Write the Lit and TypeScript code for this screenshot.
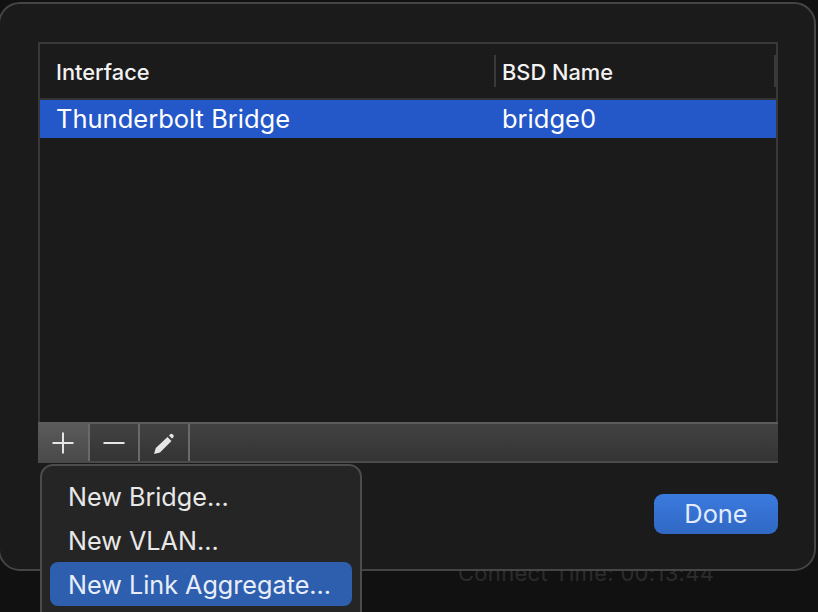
import { LitElement, html, css } from "lit";
import { customElement } from "lit/decorators.js";

@customElement("app-root")
export class AppRoot extends LitElement {
  static styles = css`
    :host {
      display: block;
      width: 818px;
      height: 612px;
      position: relative;
      overflow: hidden;
      background: #111111;
      font-family: Inter, "Liberation Sans", sans-serif;
      color: #f0f0f0;
    }

    .behind {
      height: 612px;
      box-sizing: border-box;
      padding: 560px 0 0 458px;
      font-size: 22px;
      line-height: 26px;
      letter-spacing: 0.3px;
      color: #2c2c2c;
    }

    .sheet {
      position: absolute;
      left: -2px;
      top: 2px;
      width: 818px;
      height: 569px;
      box-sizing: border-box;
      background: #1b1b1b;
      border: 2px solid #454545;
      border-radius: 22px;
      padding: 38px 36px 0 38px;
    }

    .table {
      width: 740px;
      height: 421px;
      box-sizing: border-box;
      border: 2px solid #383838;
      border-bottom: none;
      display: flex;
      flex-direction: column;
    }

    .head {
      height: 54px;
      flex: none;
      display: flex;
      align-items: center;
      border-bottom: 2px solid #333333;
      box-sizing: content-box;
    }

    .col-a {
      width: 454px;
      padding-left: 16px;
      box-sizing: border-box;
      flex: none;
    }

    .col-b {
      flex: 1;
      padding-left: 6px;
      height: 32px;
      display: flex;
      align-items: center;
      border-left: 2px solid #3a3a3a;
      border-right: 2px solid #3a3a3a;
    }

    .head span {
      display: block;
      font-size: 21.8px;
      font-weight: 500;
      color: #f2f2f2;
      padding-top: 1px;
    }

    .row {
      height: 38px;
      box-sizing: border-box;
      padding-bottom: 2px;
      flex: none;
      display: flex;
      align-items: center;
      background: #2457c8;
      color: #ffffff;
      font-size: 25.5px;
    }

    .row .col-a {
      padding-left: 16px;
      width: 462px;
    }

    .row .bsd {
      flex: 1;
    }

    .body {
      flex: 1;
    }

    .toolbar {
      height: 41px;
      flex: none;
      margin: 0 -2px;
      box-sizing: border-box;
      display: flex;
      background: linear-gradient(#424242, #343434);
      border-top: 2px solid #5c5c5c;
      border-bottom: 2px solid #4a4a4a;
    }

    .tool {
      width: 48px;
      flex: none;
      display: flex;
      align-items: center;
      justify-content: center;
      border-right: 2px solid #6a6a6a;
    }

    .tool.on {
      width: 50px;
      background: linear-gradient(#5a5a5a, #4a4a4a);
    }

    .tool svg {
      width: 24px;
      height: 24px;
      display: block;
    }

    .footer {
      display: flex;
      justify-content: flex-end;
      padding: 31px 0 0;
    }

    .done {
      width: 124px;
      height: 40px;
      box-sizing: border-box;
      padding-bottom: 2px;
      display: flex;
      align-items: center;
      justify-content: center;
      border-radius: 9px;
      background: linear-gradient(#3b7ade, #3068c4);
      color: #e3ecfb;
      font-size: 25.4px;
    }

    .menu {
      position: absolute;
      left: 40px;
      top: 464px;
      width: 322px;
      height: 160px;
      box-sizing: border-box;
      background: #252525;
      border: 2px solid #4c4c4c;
      border-radius: 13px;
      padding: 8px;
    }

    .item {
      height: 44px;
      box-sizing: border-box;
      padding: 2px 0 0 18px;
      display: flex;
      align-items: center;
      border-radius: 8px;
      font-size: 25.2px;
      color: #e8e8e8;
    }

    .item.active {
      background: #2e5fae;
      color: #e8eef9;
    }
  `;

  render() {
    return html`
      <div class="behind">Connect Time: 00:13:44</div>
      <div class="sheet">
        <div class="table">
          <div class="head">
            <div class="col-a"><span>Interface</span></div>
            <div class="col-b"><span>BSD Name</span></div>
          </div>
          <div class="row">
            <div class="col-a">Thunderbolt Bridge</div>
            <div class="bsd">bridge0</div>
          </div>
          <div class="body"></div>
          <div class="toolbar">
            <div class="tool on">
              <svg viewBox="0 0 24 24"><path d="M12 1.500v21M1.500 12h21" stroke="#e6e6e6" stroke-width="2" fill="none" /></svg>
            </div>
            <div class="tool">
              <svg viewBox="0 0 24 24"><path d="M1.500 12h21" stroke="#e6e6e6" stroke-width="2" fill="none" /></svg>
            </div>
            <div class="tool">
              <svg viewBox="0 0 24 24">
                <path d="M2 23l1.800-6L15.500 6l4 4L8 21.500z" fill="#e6e6e6" />
                <path d="M17 4.500l1.300-1.300a1.600 1.600 0 0 1 2.200 0l0.800 0.800a1.600 1.600 0 0 1 0 2.200L20 7.500z" fill="#e6e6e6" />
              </svg>
            </div>
          </div>
        </div>
        <div class="footer"><div class="done">Done</div></div>
      </div>
      <div class="menu">
        <div class="item">New Bridge...</div>
        <div class="item">New VLAN...</div>
        <div class="item active">New Link Aggregate...</div>
      </div>
    `;
  }
}
